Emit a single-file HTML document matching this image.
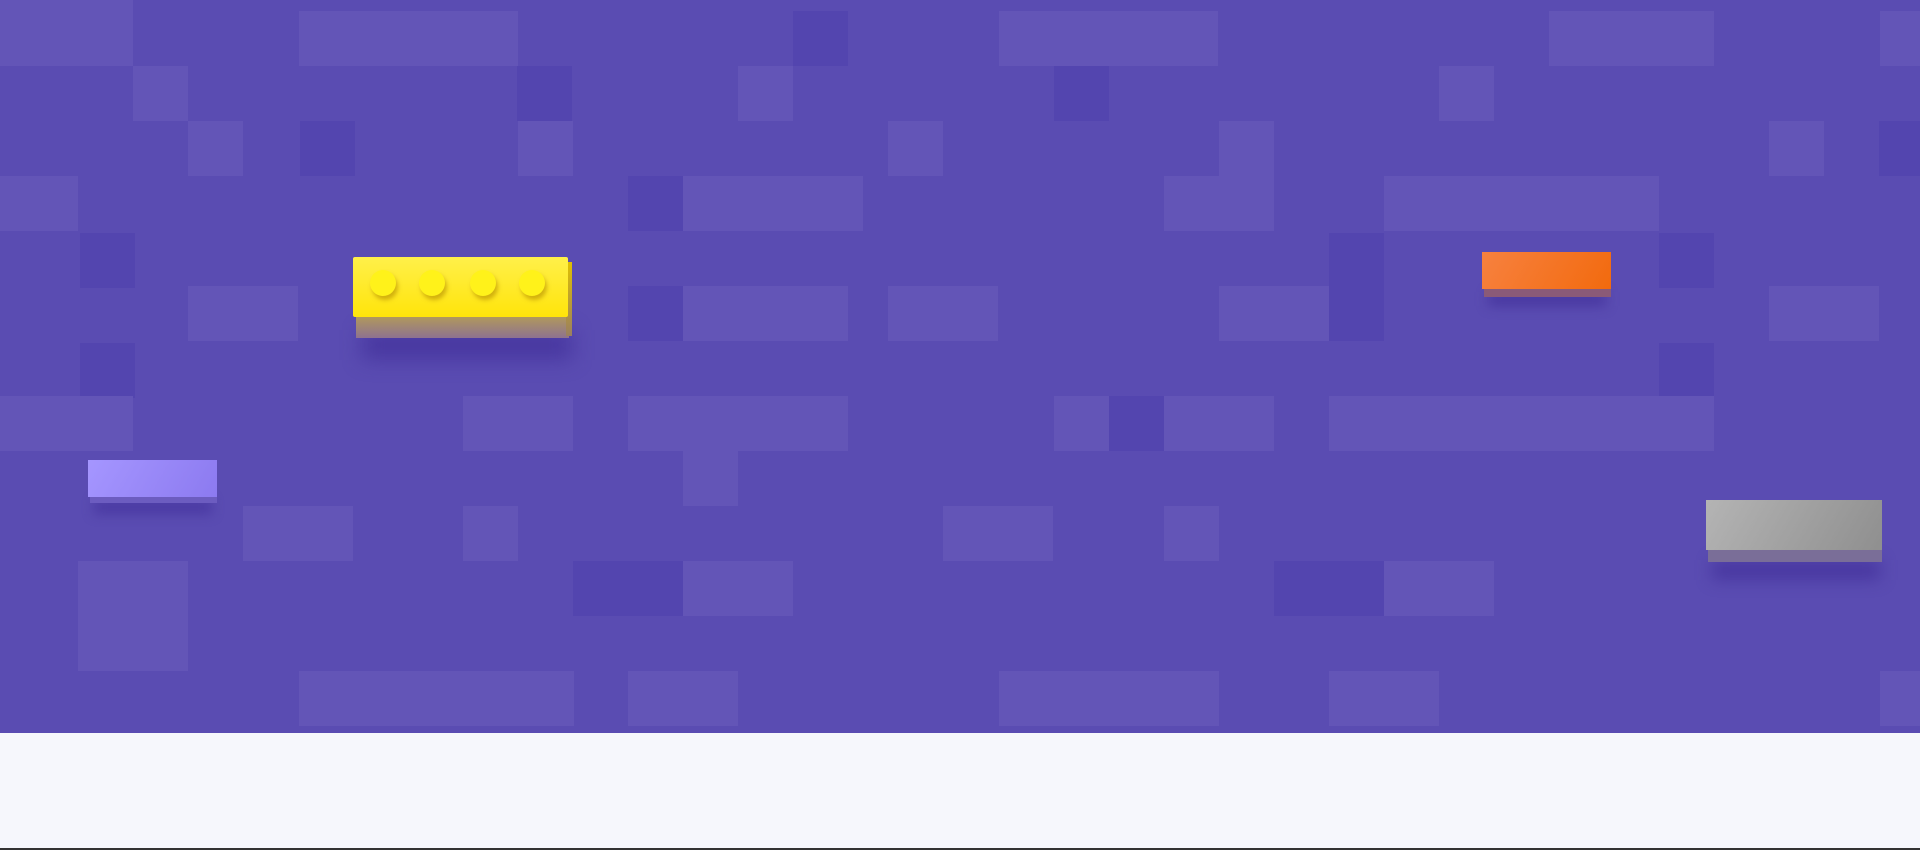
<!DOCTYPE html>
<html><head><style>
html,body{margin:0;padding:0;width:1920px;height:850px;overflow:hidden;background:#f6f7fc;font-family:"Liberation Sans",sans-serif}
#hero{position:absolute;left:0;top:0;width:1920px;height:733px;background:#5a4cb2;overflow:hidden}
.l{position:absolute;background:#6355b7}
.d{position:absolute;background:#5345af}
.b{position:absolute}
.stud{position:absolute;width:26px;height:26px;border-radius:50%;background:#fff21a;box-shadow:2px 4px 4px rgba(180,140,0,.6)}
#line{position:absolute;left:0;top:848px;width:1920px;height:2px;background:#333}
</style></head><body>
<div id="hero">
<div class="l" style="left:0;top:0;width:133px;height:66px"></div>
<div class="l" style="left:299px;top:11px;width:219px;height:55px"></div>
<div class="l" style="left:999px;top:11px;width:219px;height:55px"></div>
<div class="l" style="left:1549px;top:11px;width:165px;height:55px"></div>
<div class="l" style="left:1880px;top:11px;width:40px;height:55px"></div>
<div class="d" style="left:793px;top:11px;width:55px;height:55px"></div>
<div class="l" style="left:133px;top:66px;width:55px;height:55px"></div>
<div class="l" style="left:738px;top:66px;width:55px;height:55px"></div>
<div class="l" style="left:1439px;top:66px;width:55px;height:55px"></div>
<div class="d" style="left:517px;top:66px;width:55px;height:55px"></div>
<div class="d" style="left:1054px;top:66px;width:55px;height:55px"></div>
<div class="l" style="left:188px;top:121px;width:55px;height:55px"></div>
<div class="d" style="left:300px;top:121px;width:55px;height:55px"></div>
<div class="l" style="left:518px;top:121px;width:55px;height:55px"></div>
<div class="l" style="left:888px;top:121px;width:55px;height:55px"></div>
<div class="l" style="left:1219px;top:121px;width:55px;height:55px"></div>
<div class="l" style="left:1769px;top:121px;width:55px;height:55px"></div>
<div class="d" style="left:1879px;top:121px;width:41px;height:55px"></div>
<div class="l" style="left:0;top:176px;width:78px;height:55px"></div>
<div class="l" style="left:683px;top:176px;width:180px;height:55px"></div>
<div class="l" style="left:1164px;top:176px;width:110px;height:55px"></div>
<div class="l" style="left:1384px;top:176px;width:275px;height:55px"></div>
<div class="d" style="left:628px;top:176px;width:55px;height:55px"></div>
<div class="d" style="left:80px;top:233px;width:55px;height:55px"></div>
<div class="d" style="left:1329px;top:233px;width:55px;height:55px"></div>
<div class="d" style="left:1659px;top:233px;width:55px;height:55px"></div>
<div class="l" style="left:188px;top:286px;width:110px;height:55px"></div>
<div class="l" style="left:683px;top:286px;width:165px;height:55px"></div>
<div class="l" style="left:888px;top:286px;width:110px;height:55px"></div>
<div class="l" style="left:1219px;top:286px;width:110px;height:55px"></div>
<div class="l" style="left:1769px;top:286px;width:110px;height:55px"></div>
<div class="d" style="left:628px;top:286px;width:55px;height:55px"></div>
<div class="d" style="left:1329px;top:286px;width:55px;height:55px"></div>
<div class="d" style="left:80px;top:343px;width:55px;height:55px"></div>
<div class="d" style="left:1659px;top:343px;width:55px;height:55px"></div>
<div class="l" style="left:0;top:396px;width:133px;height:55px"></div>
<div class="l" style="left:463px;top:396px;width:110px;height:55px"></div>
<div class="l" style="left:628px;top:396px;width:220px;height:55px"></div>
<div class="l" style="left:1054px;top:396px;width:55px;height:55px"></div>
<div class="d" style="left:1109px;top:396px;width:55px;height:55px"></div>
<div class="l" style="left:1164px;top:396px;width:110px;height:55px"></div>
<div class="l" style="left:1329px;top:396px;width:385px;height:55px"></div>
<div class="l" style="left:683px;top:451px;width:55px;height:55px"></div>
<div class="l" style="left:243px;top:506px;width:110px;height:55px"></div>
<div class="l" style="left:463px;top:506px;width:55px;height:55px"></div>
<div class="l" style="left:943px;top:506px;width:110px;height:55px"></div>
<div class="l" style="left:1164px;top:506px;width:55px;height:55px"></div>
<div class="l" style="left:78px;top:561px;width:110px;height:110px"></div>
<div class="l" style="left:683px;top:561px;width:110px;height:55px"></div>
<div class="l" style="left:1384px;top:561px;width:110px;height:55px"></div>
<div class="d" style="left:573px;top:561px;width:110px;height:55px"></div>
<div class="d" style="left:1274px;top:561px;width:110px;height:55px"></div>
<div class="l" style="left:299px;top:671px;width:275px;height:55px"></div>
<div class="l" style="left:628px;top:671px;width:110px;height:55px"></div>
<div class="l" style="left:999px;top:671px;width:220px;height:55px"></div>
<div class="l" style="left:1329px;top:671px;width:110px;height:55px"></div>
<div class="l" style="left:1880px;top:671px;width:40px;height:55px"></div>

<!-- yellow brick -->
<div class="b" style="left:362px;top:330px;width:210px;height:30px;background:rgba(50,30,140,.45);filter:blur(10px)"></div>
<div class="b" style="left:356px;top:316px;width:213px;height:22px;background:linear-gradient(#b29a5a,#8e7290)"></div>
<div class="b" style="left:566px;top:262px;width:6px;height:74px;background:linear-gradient(#e0c000,#9a7f60)"></div>
<div class="b" style="left:353px;top:257px;width:215px;height:60px;background:linear-gradient(#fff04a,#ffe40a);border-radius:2px"></div>
<div class="stud" style="left:370px;top:270px"></div>
<div class="stud" style="left:419px;top:270px"></div>
<div class="stud" style="left:470px;top:270px"></div>
<div class="stud" style="left:519px;top:270px"></div>
<!-- orange -->
<div class="b" style="left:1488px;top:292px;width:118px;height:14px;background:rgba(50,30,140,.45);filter:blur(6px)"></div>
<div class="b" style="left:1484px;top:287px;width:127px;height:10px;background:#8a5a78"></div>
<div class="b" style="left:1482px;top:252px;width:129px;height:37px;background:linear-gradient(120deg,#f7813f,#f26a0e)"></div>
<!-- purple -->
<div class="b" style="left:94px;top:500px;width:118px;height:14px;background:rgba(50,30,140,.4);filter:blur(6px)"></div>
<div class="b" style="left:90px;top:495px;width:127px;height:8px;background:#6c5cc0"></div>
<div class="b" style="left:88px;top:460px;width:129px;height:37px;background:linear-gradient(120deg,#a596ff,#8c7af0)"></div>
<!-- gray -->
<div class="b" style="left:1712px;top:560px;width:168px;height:20px;background:rgba(50,30,140,.45);filter:blur(8px)"></div>
<div class="b" style="left:1708px;top:548px;width:174px;height:14px;background:#7a6e98"></div>
<div class="b" style="left:1706px;top:500px;width:176px;height:50px;background:linear-gradient(120deg,#b4b4b4,#8f8f8f)"></div>
</div>
<div id="line"></div>
</body></html>
